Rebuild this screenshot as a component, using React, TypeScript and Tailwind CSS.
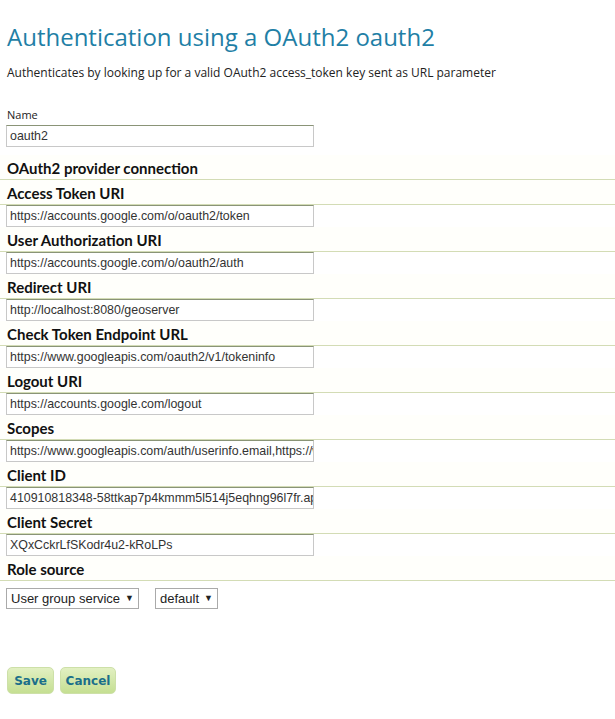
import React from "react";

const fields: [string, string][] = [
  ["Access Token URI", "https://accounts.google.com/o/oauth2/token"],
  ["User Authorization URI", "https://accounts.google.com/o/oauth2/auth"],
  ["Redirect URI", "http://localhost:8080/geoserver"],
  ["Check Token Endpoint URL", "https://www.googleapis.com/oauth2/v1/tokeninfo"],
  ["Logout URI", "https://accounts.google.com/logout"],
  ["Scopes", "https://www.googleapis.com/auth/userinfo.email,https://www.googleapis.com/auth/userinfo.profile"],
  ["Client ID", "410910818348-58ttkap7p4kmmm5l514j5eqhng96l7fr.apps.googleusercontent.com"],
  ["Client Secret", "XQxCckrLfSKodr4u2-kRoLPs"],
];

function Header({ text }: { text: string }) {
  return (
    <div className="h-[25px] flex items-end pb-[3px] border-b border-[#d3dcb5] bg-[#fffffb] text-[15px] font-bold text-[#111] font-['Lato',sans-serif] pl-[7px] leading-none">
      {text}
    </div>
  );
}

function Field({ value }: { value: string }) {
  return (
    <div className="pl-[6px] h-[22px]">
      <div className="w-[308px] h-[22px] border border-[#c8c8c8] border-t-[#8a9477] bg-white overflow-hidden whitespace-nowrap pl-[3px] text-[12.4px] leading-[20px] text-[#333] font-['Liberation_Sans',Arial,sans-serif]">
        {value}
      </div>
    </div>
  );
}

export default function App() {
  return (
    <div className="w-[615px] h-[719px] bg-white relative">
      <div className="pt-[21px] pl-[7px] text-[24px] leading-[32px] text-[#1f7fa6] font-['Open_Sans',sans-serif]">
        Authentication using a OAuth2 oauth2
      </div>
      <div className="pl-[7px] mt-[12px] text-[12px] leading-[16px] text-[#222] font-['Open_Sans',sans-serif]">
        Authenticates by looking up for a valid OAuth2 access_token key sent as URL parameter
      </div>
      <div className="pl-[7px] mt-[27px] text-[11px] leading-[14px] text-[#222] font-['Open_Sans',sans-serif]">Name</div>
      <div className="pl-[6px] mt-[3px]">
        <div className="w-[308px] h-[22px] border border-[#c8c8c8] border-t-[#8a9477] pl-[3px] text-[12.4px] leading-[20px] text-[#333] font-['Liberation_Sans',Arial,sans-serif]">
          oauth2
        </div>
      </div>
      <div className="mt-[8px]">
        <Header text="OAuth2 provider connection" />
        {fields.map(([label, value]) => (
          <div key={label}>
            <Header text={label} />
            <Field value={value} />
          </div>
        ))}
        <Header text="Role source" />
        <div className="flex gap-[16px] pl-[6px] mt-[7px] font-['Liberation_Sans',Arial,sans-serif] text-[13px] text-[#222]">
          <div className="h-[21px] border border-[#aaa] px-[4px] flex items-center gap-[5px]">
            User group service <span className="text-[9px]">▼</span>
          </div>
          <div className="h-[21px] border border-[#aaa] px-[4px] flex items-center gap-[5px]">
            default <span className="text-[9px]">▼</span>
          </div>
        </div>
      </div>
      <div className="flex gap-[6px] pl-[7px] absolute left-0 top-[667px]">
        <button className="w-[47px] h-[27px] rounded-[5px] bg-gradient-to-b from-[#e2f0c2] to-[#c5df92] border border-[#cde0a8] text-[#1b6f8a] font-bold text-[12px] font-['DejaVu_Sans',sans-serif]">Save</button>
        <button className="w-[56px] h-[27px] rounded-[5px] bg-gradient-to-b from-[#e2f0c2] to-[#c5df92] border border-[#cde0a8] text-[#1b6f8a] font-bold text-[12px] font-['DejaVu_Sans',sans-serif]">Cancel</button>
      </div>
    </div>
  );
}
